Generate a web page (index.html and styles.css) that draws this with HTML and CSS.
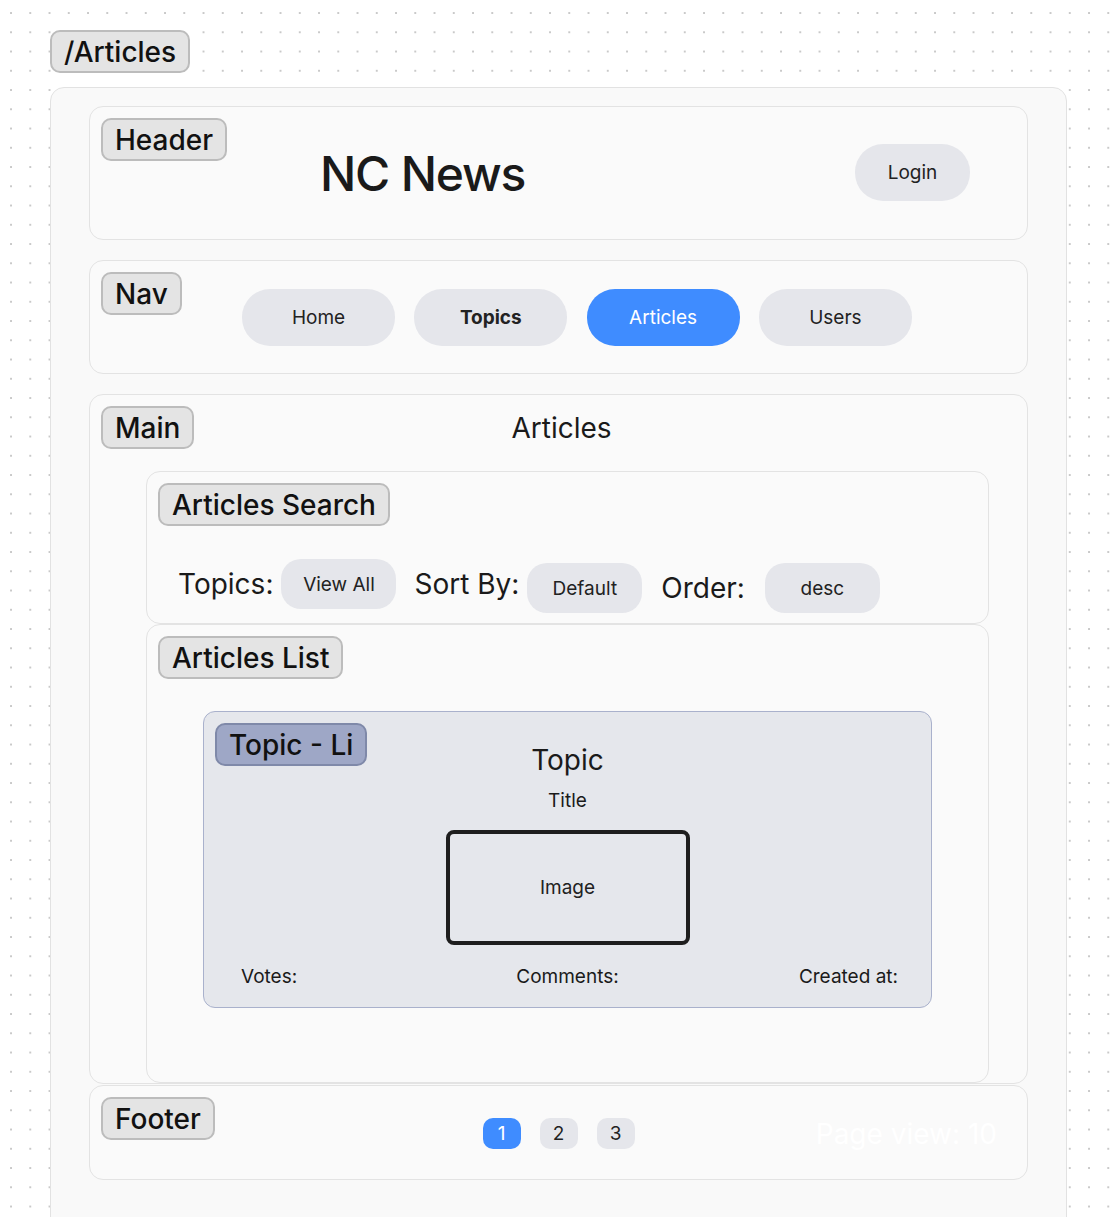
FILE: index.html
```html
<!DOCTYPE html>
<html lang="en">
<head>
<meta charset="utf-8">
<title>/Articles</title>
<link rel="stylesheet" href="styles.css">
</head>
<body>
<div class="page">
  <div class="tag tag-route">/Articles</div>
  <div class="frame">
    <header class="section header">
      <div class="tag">Header</div>
      <h1 class="brand">NC News</h1>
      <button class="pill login">Login</button>
    </header>

    <nav class="section nav">
      <div class="tag">Nav</div>
      <button class="pill navbtn">Home</button>
      <button class="pill navbtn bold">Topics</button>
      <button class="pill navbtn active">Articles</button>
      <button class="pill navbtn">Users</button>
    </nav>

    <main class="section main">
      <div class="tag">Main</div>
      <h2 class="main-title">Articles</h2>

      <section class="inner search">
        <div class="tag">Articles Search</div>
        <div class="filters">
          <span class="flabel">Topics:</span>
          <button class="chip chip-up">View All</button>
          <span class="flabel flabel-gap">Sort By:</span>
          <button class="chip">Default</button>
          <span class="flabel flabel-gap flabel-low">Order:</span>
          <button class="chip chip-wide">desc</button>
        </div>
      </section>

      <section class="inner list">
        <div class="tag">Articles List</div>
        <article class="card">
          <div class="tag tag-blue">Topic - Li</div>
          <div class="card-topic">Topic</div>
          <div class="card-title">Title</div>
          <div class="image-box">Image</div>
          <div class="stats">
            <span class="stat-left">Votes:</span>
            <span class="stat-mid">Comments:</span>
            <span class="stat-right">Created at:</span>
          </div>
        </article>
      </section>
    </main>

    <footer class="section footer">
      <div class="tag">Footer</div>
      <div class="pager">
        <button class="pg pg-active">1</button>
        <button class="pg">2</button>
        <button class="pg">3</button>
      </div>
      <div class="views">Page view: 10</div>
    </footer>
  </div>
</div>
</body>
</html>
```

FILE: styles.css
```css
* { box-sizing: border-box; }

html, body {
  margin: 0;
  padding: 0;
}

body {
  font-family: Inter, "Noto Sans", "Liberation Sans", sans-serif;
  color: #222;
  background-color: #ffffff;
  background-image: radial-gradient(circle, #c9c9c9 1px, transparent 1.4px);
  background-size: 19.25px 19.25px;
  background-position: 1.4px 3.4px;
  min-height: 1217px;
  overflow: hidden;
}

.page {
  padding: 30px 0 0 50px;
  width: 1068px;
}

button {
  font-family: inherit;
  border: none;
  cursor: pointer;
}

.tag {
  display: inline-flex;
  align-items: center;
  height: 43px;
  padding: 0 12px;
  background: #e4e4e4;
  border: 2px solid #bcbcbc;
  border-radius: 10px;
  font-size: 28px;
  font-weight: 500;
  color: #111;
  white-space: nowrap;
}

.section > .tag,
.inner > .tag,
.card > .tag {
  position: absolute;
  left: 11px;
  top: 11px;
}

.tag-route {
  margin-bottom: 14px;
}

.tag-blue {
  background: #9ea7c6;
  border-color: #7f89a9;
}

.frame {
  width: 1017px;
  background: #f9f9f9;
  border: 1px solid #e2e2e2;
  border-radius: 14px;
  padding: 18px 38px 80px 38px;
  display: flex;
  flex-direction: column;
}

.section {
  position: relative;
  background: #fafafa;
  border: 1px solid #e3e3e3;
  border-radius: 14px;
}

/* Header */
.header {
  height: 134px;
  display: flex;
  align-items: center;
  justify-content: space-between;
  padding: 0 57px 0 230px;
}

.brand {
  margin: 0;
  font-size: 48px;
  font-weight: 500;
  color: #1a1a1a;
  letter-spacing: -1.2px;
}

.pill {
  background: #e5e6eb;
  color: #222;
  font-size: 19px;
  border-radius: 28px;
}

.login {
  width: 115px;
  height: 57px;
  margin-top: -2px;
}

/* Nav */
.nav {
  margin-top: 20px;
  height: 114px;
  display: flex;
  align-items: center;
  gap: 19.3px;
  padding-left: 152px;
}

.navbtn {
  width: 153px;
  height: 57px;
}

.navbtn.bold { font-weight: 700; }

.navbtn.active {
  background: #3f8cff;
  color: #fff;
}

/* Main */
.main {
  margin-top: 20px;
  height: 690px;
  padding: 11px 38px 0 56px;
  display: flex;
  flex-direction: column;
}

.main-title {
  margin: 0 0 21px -12px;
  height: 44px;
  line-height: 44px;
  font-size: 28px;
  font-weight: 400;
  text-align: center;
  color: #1a1a1a;
}

.inner {
  position: relative;
  background: #fafafa;
  border: 1px solid #e3e3e3;
  border-radius: 14px;
}

.search {
  height: 153px;
  padding: 87px 0 0 31px;
}

.filters {
  display: flex;
  align-items: flex-start;
}

.flabel {
  font-size: 28px;
  line-height: 50px;
  margin-right: 8px;
  color: #1a1a1a;
}

.flabel-gap { margin-left: 18px; }

.flabel-low { margin-top: 4px; margin-left: 19px; margin-right: 20px; }

.chip {
  width: 115px;
  height: 50px;
  margin-top: 4px;
  background: #e5e6eb;
  color: #222;
  font-size: 19px;
  border-radius: 20px;
}

.chip-up { margin-top: 0; }

.list {
  margin-top: 0;
  flex: 1;
  padding-top: 86px;
  display: flex;
  flex-direction: column;
  align-items: center;
}

/* Card */
.card {
  position: relative;
  width: 729px;
  height: 297px;
  background: #e5e7ec;
  border: 1px solid #a9b1cc;
  border-radius: 12px;
  display: flex;
  flex-direction: column;
  align-items: center;
  padding-top: 31px;
}

.card-topic {
  font-size: 28px;
  line-height: 34px;
  color: #1a1a1a;
}

.card-title {
  font-size: 19px;
  line-height: 24px;
  margin-top: 12px;
  color: #1a1a1a;
}

.image-box {
  margin-top: 17px;
  width: 244px;
  height: 115px;
  border: 4px solid #1e1e1e;
  border-radius: 8px;
  display: flex;
  align-items: center;
  justify-content: center;
  font-size: 19px;
  color: #222;
}

.stats {
  width: 100%;
  margin-top: 20px;
  padding: 0 33px 0 37px;
  display: grid;
  grid-template-columns: 1fr auto 1fr;
  font-size: 19px;
  line-height: 24px;
  color: #1a1a1a;
}

.stat-left { justify-self: start; }
.stat-mid { justify-self: center; margin-right: 4px; }
.stat-right { justify-self: end; }

/* Footer */
.footer {
  margin-top: 1px;
  height: 95px;
  display: grid;
  grid-template-columns: 1fr auto 1fr;
  align-items: center;
}

.pager {
  grid-column: 2;
  display: flex;
  gap: 19px;
  margin-top: 2px;
}

.pg {
  width: 38px;
  height: 31px;
  border-radius: 10px;
  background: #e5e6eb;
  color: #222;
  font-size: 19px;
  padding: 0;
}

.pg-active {
  background: #3f8cff;
  color: #fff;
}

.views {
  grid-column: 3;
  justify-self: end;
  margin-right: 30px;
  font-size: 28px;
  color: #ffffff;
  margin-top: 2px;
}
```
